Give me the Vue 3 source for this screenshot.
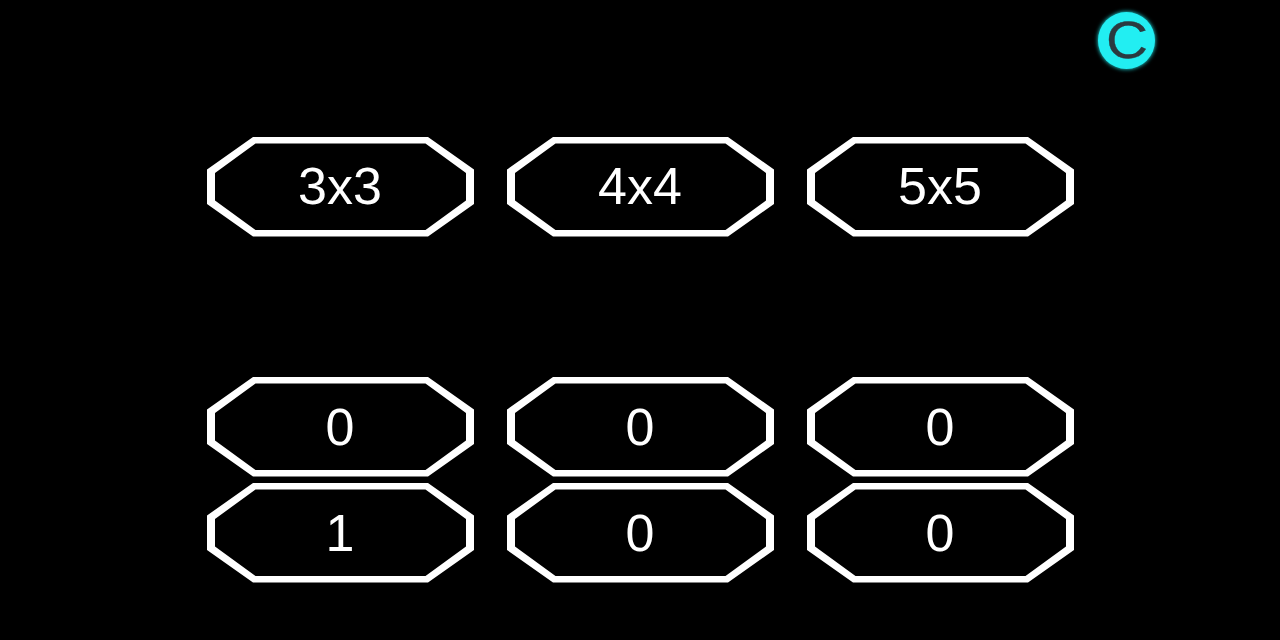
<script setup>
const sizes = ['3x3', '4x4', '5x5']
const scores = ['0', '0', '0', '1', '0', '0']
const frame = 'M46 0H221L267 32.5V67L221 99.5H46L0 67V32.5Z M48.5 6.5L8 36V63.5L48.5 93H218.5L259 63.5V36L218.5 6.5Z'
</script>

<template>
  <div class="page">
    <header class="top">
      <button class="copy"><span class="letter">C</span></button>
    </header>
    <section class="grid sizes">
      <button v-for="s in sizes" :key="s" class="octa">
        <svg class="shape" viewBox="0 0 267 100" aria-hidden="true">
          <path :d="frame" />
        </svg>
        <span class="label">{{ s }}</span>
      </button>
    </section>
    <section class="grid scores">
      <button v-for="(n, i) in scores" :key="i" class="octa">
        <svg class="shape" viewBox="0 0 267 100" aria-hidden="true">
          <path :d="frame" />
        </svg>
        <span class="label">{{ n }}</span>
      </button>
    </section>
  </div>
</template>

<style>
html, body { margin: 0; background: #000; }
</style>

<style scoped>
.page {
  width: 1280px;
  height: 640px;
  background: #000;
  overflow: hidden;
  font-family: "Liberation Sans", Arial, sans-serif;
}
.top {
  display: flex;
  justify-content: flex-end;
  height: 136.5px;
  padding: 11.5px 125px 0 0;
  box-sizing: border-box;
}
.copy {
  width: 57px;
  height: 57px;
  border: none;
  border-radius: 50%;
  padding: 0;
  background: #22eef2;
  color: #2a3a40;
  font: 52px/57px "Liberation Sans", Arial, sans-serif;
  box-shadow: 0 0 4px #22eef2;
}
.letter {
  display: block;
  transform: translateX(0.5px) scaleX(1.12);
  -webkit-text-stroke: 0.3px #2a3a40;
}
.grid {
  display: grid;
  grid-template-columns: repeat(3, 267px);
  column-gap: 33px;
  row-gap: 6.5px;
  justify-content: center;
}
.scores {
  margin-top: 140px;
}
.octa {
  position: relative;
  box-sizing: border-box;
  height: 100px;
  padding: 0 0 2px;
  border: none;
  background: none;
  color: #fff;
  font: 52px/98px "Liberation Sans", Arial, sans-serif;
}
.scores .octa {
  padding-bottom: 0;
}
.shape {
  position: absolute;
  inset: 0;
  width: 100%;
  height: 100%;
}
.shape path {
  fill: #fff;
  fill-rule: evenodd;
}
.label {
  position: relative;
}
</style>
